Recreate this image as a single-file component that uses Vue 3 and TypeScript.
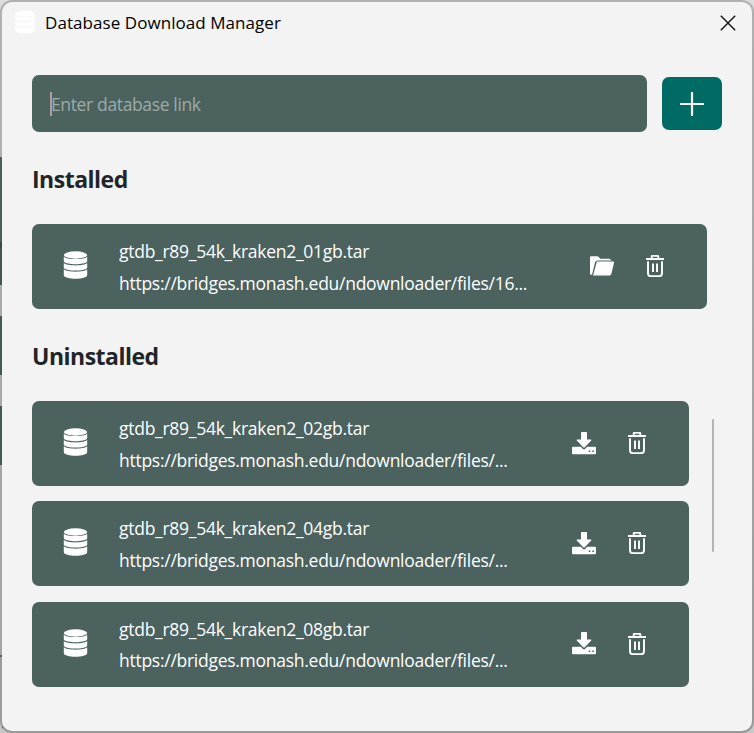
<script setup lang="ts">
import { ref } from 'vue'

interface Database {
  name: string
  url: string
}

const link = ref('')

const installed: Database[] = [
  { name: 'gtdb_r89_54k_kraken2_01gb.tar', url: 'https://bridges.monash.edu/ndownloader/files/16...' },
]

const uninstalled: Database[] = [
  { name: 'gtdb_r89_54k_kraken2_02gb.tar', url: 'https://bridges.monash.edu/ndownloader/files/...' },
  { name: 'gtdb_r89_54k_kraken2_04gb.tar', url: 'https://bridges.monash.edu/ndownloader/files/...' },
  { name: 'gtdb_r89_54k_kraken2_08gb.tar', url: 'https://bridges.monash.edu/ndownloader/files/...' },
]
</script>

<template>
  <svg class="symbols" aria-hidden="true">
    <symbol id="db" viewBox="0 0 24 28">
      <ellipse cx="12" cy="4" rx="11.7" ry="3.7" />
      <path d="M.3 5.7C3 8.8 21 8.8 23.7 5.7V10.6C21 14.2 3 14.2.3 10.6Z" />
      <path d="M.3 12C3 15.2 21 15.2 23.7 12V16.9C21 20.4 3 20.4.3 16.9Z" />
      <path d="M.3 18.3C3 21.5 21 21.5 23.7 18.3V24C23.7 29 .3 29 .3 24Z" />
    </symbol>
    <symbol id="trash" viewBox="0 0 18 22">
      <path
        d="M5.7 3V1.4Q5.7.9 6.2.9H11.8Q12.3.9 12.3 1.4V3M0 4H18M2 6.2V18.2Q2 21.1 4.9 21.1H13.1Q16 21.1 16 18.2V6.2M7 8.5V17M11 8.5V17"
        fill="none"
        stroke="currentColor"
        stroke-width="1.9"
      />
    </symbol>
    <symbol id="folder" viewBox="0 0 24 20">
      <path d="M0 17.8V1.6Q0 .3 1.3.3H7.2Q8 .3 8.5.8L10.3 2.8H19.3Q20.7 2.8 20.9 4.4H7.8Q5.6 4.4 5 6.4L2 18.8Q0 19 0 17.8Z" />
      <path d="M6.5 7Q7 5.5 8.5 5.5H23Q24.2 5.5 24 6.7L21.4 17.8Q21 19.6 19.4 19.6H3Z" />
      <path d="M6.3 6.6Q6.7 5.2 8.2 5.2H22.8M3 19.4H19.5" class="folder-edge" />
    </symbol>
    <symbol id="download" viewBox="0 0 24 23">
      <path d="M9 .8Q9 0 9.8 0H14.2Q15 0 15 .8V7.4H18.8Q20 7.4 19.2 8.4L12.8 15.2Q12 16 11.2 15.2L4.8 8.4Q4 7.4 5.2 7.4H9Z" />
      <path
        fill-rule="evenodd"
        d="M1.2 14.8H8.8L10.7 16.8Q12 18 13.3 16.8L15.2 14.8H22.8Q24 14.8 24 16V21.1Q24 22.3 22.8 22.3H1.2Q0 22.3 0 21.1V16Q0 14.8 1.2 14.8ZM16.7 18.4V20H18.3V18.4ZM20.3 18.4V20H21.9V18.4Z"
      />
    </symbol>
  </svg>
  <div class="desktop">
    <div class="frame">
      <main class="window">
        <header class="titlebar">
          <svg class="app-icon"><use href="#db" /></svg>
          <span class="title">Database Download Manager</span>
          <button class="close" aria-label="Close">
            <svg viewBox="0 0 16 16"><path d="M.8.8 15.2 15.2M15.2.8.8 15.2" /></svg>
          </button>
        </header>

        <form class="add" @submit.prevent>
          <label class="field">
            <i class="caret"></i>
            <input v-model="link" placeholder="Enter database link" />
          </label>
          <button class="add-button" aria-label="Add">
            <svg viewBox="0 0 24 24"><path d="M12 1V23M1 12H23" /></svg>
          </button>
        </form>

        <h2>Installed</h2>
        <ul class="list wide">
          <li v-for="db in installed" :key="db.name" class="card">
            <svg class="db"><use href="#db" /></svg>
            <div class="info">
              <span class="name">{{ db.name }}</span>
              <span class="url">{{ db.url }}</span>
            </div>
            <svg class="folder"><use href="#folder" /></svg>
            <svg class="trash"><use href="#trash" /></svg>
          </li>
        </ul>

        <h2>Uninstalled</h2>
        <div class="scroll">
          <ul class="list">
            <li v-for="db in uninstalled" :key="db.name" class="card">
              <svg class="db"><use href="#db" /></svg>
              <div class="info">
                <span class="name">{{ db.name }}</span>
                <span class="url">{{ db.url }}</span>
              </div>
              <svg class="download"><use href="#download" /></svg>
              <svg class="trash"><use href="#trash" /></svg>
            </li>
          </ul>
          <div class="thumb"></div>
        </div>
      </main>
    </div>
  </div>
</template>

<style>
body {
  margin: 0;
  overflow: hidden;
}
</style>

<style scoped>
* {
  box-sizing: border-box;
}
svg {
  display: block;
  flex: none;
  fill: currentColor;
}
.symbols {
  position: absolute;
  width: 0;
  height: 0;
}
.folder-edge {
  fill: none;
  stroke: #a9b4b2;
  stroke-width: 1;
}
button {
  border: 0;
  padding: 0;
  display: flex;
  align-items: center;
  justify-content: center;
}
.desktop {
  width: 754px;
  height: 733px;
  background: linear-gradient(#dedede, #c8c8c8);
  font-family: 'Open Sans', 'Noto Sans', sans-serif;
}
.frame {
  height: 733px;
  padding: 2px;
  border-radius: 12px;
  background:
    linear-gradient(
      #b0b0b0 157px,
      #4b605d 157px 242px,
      #404846 242px 248px,
      #465552 248px 285px,
      #aaa 285px 316px,
      #455855 316px 375px,
      #a9a9a9 375px 406px,
      #455855 406px 465px,
      #a5a5a5 465px 655px,
      #56646f 655px 657px,
      #9c9c9c 657px 727px,
      #45586a 727px 729px,
      #999 729px
    ) 0 0 / 3px 100% no-repeat,
    linear-gradient(#b0b0b0, #a3a3a3 60%, #999);
}
.window {
  height: 729px;
  border-radius: 10px;
  background: #f3f3f3;
  padding: 0 30px;
}
.titlebar {
  height: 73px;
  margin: 0 -30px;
  padding: 8px 16.5px 0 13px;
  display: flex;
  align-items: flex-start;
}
.app-icon {
  width: 20px;
  height: 24px;
  color: #fff;
}
.title {
  margin-left: 10px;
  flex: 1;
  color: #000;
  font-size: 17px;
  letter-spacing: 0.06px;
  line-height: 25px;
  white-space: nowrap;
}
.close {
  width: 16px;
  height: 16px;
  margin-top: 4.5px;
  background: none;
}
.close svg {
  width: 16px;
  height: 16px;
  stroke: #111;
  stroke-width: 1.4;
}
.add {
  display: flex;
  align-items: center;
  gap: 15px;
  height: 57px;
}
.field {
  display: flex;
  align-items: center;
  width: 615px;
  height: 57px;
  padding-left: 18px;
  border-radius: 7px;
  background: #4b625f;
}
.caret {
  width: 2px;
  height: 24px;
  background: #b49c9c;
}
.field input {
  flex: 1;
  border: 0;
  outline: 0;
  padding: 2px 0 0;
  margin-left: -1px;
  background: none;
  font: 17.5px/25px 'Open Sans', 'Noto Sans', sans-serif;
  letter-spacing: -0.36px;
}
.field input::placeholder {
  color: #9eaaa8;
  opacity: 1;
}
.add-button {
  width: 60px;
  height: 53px;
  border-radius: 7px;
  background: #006b65;
}
.add-button svg {
  width: 24px;
  height: 24px;
  stroke: #fff;
  stroke-width: 2.2;
  stroke-linecap: round;
}
h2 {
  margin: 31px 0 29px;
  color: #212529;
  font-size: 23px;
  font-weight: 700;
  letter-spacing: -0.5px;
  line-height: 32px;
}
.list {
  margin: 0;
  padding: 0;
  list-style: none;
  width: 657px;
  display: flex;
  flex-direction: column;
  gap: 15.4px;
}
.wide {
  width: 675px;
}
.card {
  height: 85px;
  display: flex;
  align-items: center;
  padding: 0 43px 1px 31px;
  border-radius: 7px;
  background: #4b625f;
  color: #fff;
}
.db {
  width: 25px;
  height: 28px;
  margin-top: -2px;
}
.info {
  flex: 1;
  margin: 3px 0 0 31px;
  display: flex;
  flex-direction: column;
  white-space: nowrap;
  font-size: 17.5px;
  letter-spacing: -0.27px;
  line-height: 31.5px;
}
.folder {
  width: 24px;
  height: 20px;
}
.download {
  width: 24px;
  height: 23px;
}
.trash {
  width: 18px;
  height: 22px;
  margin-left: 32px;
}
.scroll {
  display: flex;
  align-items: flex-start;
}
.thumb {
  width: 2px;
  height: 133px;
  margin: 18px 0 0 23px;
  border-radius: 1px;
  background: #b3b3b3;
}
</style>
